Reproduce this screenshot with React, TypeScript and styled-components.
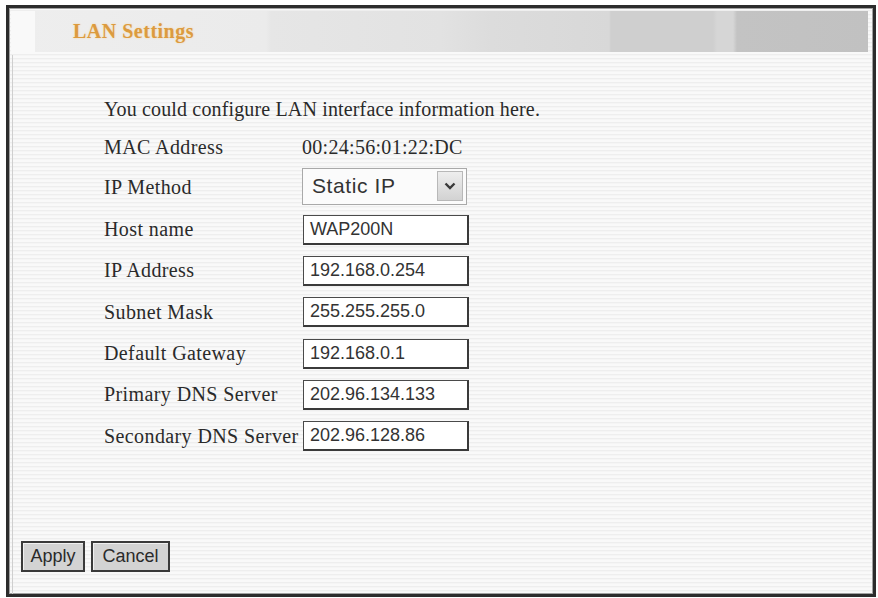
import React from "react";
import styled, { createGlobalStyle } from "styled-components";

const Global = createGlobalStyle`
  html, body { margin: 0; padding: 0; background: #ffffff; }
  body { width: 878px; height: 598px; overflow: hidden; }
`;

const stripes = `repeating-linear-gradient(
  to bottom,
  #f9f9f9 0px,
  #f9f9f9 2px,
  #eeeeee 2px,
  #eeeeee 3px,
  #f5f5f5 3px,
  #f5f5f5 4px
)`;

const Frame = styled.div`
  box-sizing: border-box;
  margin: 5px 0 0 6px;
  width: 870px;
  height: 592px;
  border: 3px solid #2c2c2c;
  box-shadow: inset 0 0 0 1px #a0a0a0;
  background: ${stripes};
  display: flex;
  flex-direction: column;
  padding: 3px 5px 0 2px;
`;

const HeaderBand = styled.div`
  height: 41px;
  display: flex;
  align-items: center;
  flex-shrink: 0;
  background: linear-gradient(
    to right,
    #eeeeee 0px,
    #ebebeb 255px,
    #e6e6e6 260px,
    #e2e2e2 430px,
    #dcdcdc 480px,
    #d8d8d8 598px,
    #cfcfcf 600px,
    #cfcfcf 702px,
    #d6d6d6 706px,
    #d6d6d6 722px,
    #c3c3c3 726px,
    #c1c1c1 100%
  );
`;

const HeaderTab = styled.div`
  width: 24px;
  height: 100%;
  background: #f9f9f9;
`;

const Title = styled.h1`
  margin: 0 0 0 38px;
  font-family: "Liberation Serif", "Times New Roman", serif;
  font-size: 20px;
  font-weight: bold;
  letter-spacing: 0.5px;
  color: #dc9b3f;
  text-shadow: 0 0 2px #f3d29c;
`;

const Content = styled.div`
  flex: 1;
  display: flex;
  flex-direction: column;
  margin: 3px 0 0 1px;
  border-left: 1px solid #cfcfcf;
`;

const Form = styled.div`
  display: grid;
  grid-template-columns: 198px 170px;
  grid-template-rows: 38px 38px 43px repeat(6, 41.3px);
  align-items: center;
  padding: 35px 0 0 91px;
  font-family: "Liberation Serif", "Times New Roman", serif;
  font-size: 20px;
  color: #2a2a2a;
`;

const Intro = styled.div`
  grid-column: 1 / span 2;
  white-space: nowrap;
  letter-spacing: 0.15px;
`;

const Label = styled.div`
  white-space: nowrap;
  letter-spacing: 0.4px;
`;

const Value = styled.div`
  display: flex;
  align-items: center;
  white-space: nowrap;
  letter-spacing: 0.3px;
`;

const TextBox = styled.div`
  box-sizing: border-box;
  width: 166px;
  height: 30px;
  margin-left: 1px;
  background: #ffffff;
  border: 1px solid #4a4a4a;
  border-bottom-width: 2px;
  border-right-width: 2px;
  border-right-color: #3a3a3a;
  border-bottom-color: #3a3a3a;
  display: flex;
  align-items: center;
  padding-left: 6px;
  font-family: "Liberation Sans", Arial, sans-serif;
  font-size: 18px;
  letter-spacing: 0;
  color: #333333;
`;

const Select = styled.div`
  box-sizing: border-box;
  width: 165px;
  height: 37px;
  margin-top: -3px;
  background: #fbfbfb;
  border: 1px solid #a9a9a9;
  display: flex;
  align-items: center;
  justify-content: space-between;
  padding: 0 3px 0 9px;
  font-family: "Liberation Sans", Arial, sans-serif;
  font-size: 21px;
  letter-spacing: 0.6px;
  color: #333333;
`;

const DropButton = styled.div`
  box-sizing: border-box;
  width: 26px;
  height: 30px;
  border: 1px solid #b8b8b8;
  background: linear-gradient(to bottom, #eeeeee, #d2d2d2);
  display: flex;
  align-items: center;
  justify-content: center;
`;

const ButtonBar = styled.div`
  margin-top: auto;
  display: flex;
  gap: 6px;
  padding: 0 0 22px 8px;
`;

const Button = styled.button<{ $w: number }>`
  box-sizing: border-box;
  width: ${(p) => p.$w}px;
  height: 31px;
  padding: 0;
  background: #d3d3d3;
  border: 2px solid #3a3a3a;
  box-shadow: inset 1px 1px 0 #f0f0f0;
  font-family: "Liberation Sans", Arial, sans-serif;
  font-size: 18px;
  color: #2a2a2a;
`;

type Field = { label: string; value: string };

const fields: Field[] = [
  { label: "Host name", value: "WAP200N" },
  { label: "IP Address", value: "192.168.0.254" },
  { label: "Subnet Mask", value: "255.255.255.0" },
  { label: "Default Gateway", value: "192.168.0.1" },
  { label: "Primary DNS Server", value: "202.96.134.133" },
  { label: "Secondary DNS Server", value: "202.96.128.86" },
];

export default function App() {
  return (
    <>
      <Global />
      <Frame>
        <HeaderBand>
          <HeaderTab />
          <Title>LAN Settings</Title>
        </HeaderBand>
        <Content>
          <Form>
            <Intro>You could configure LAN interface information here.</Intro>
            <Label>MAC Address</Label>
            <Value>00:24:56:01:22:DC</Value>
            <Label>IP Method</Label>
            <Value>
              <Select>
                <span>Static IP</span>
                <DropButton>
                  <svg width="12" height="8" viewBox="0 0 12 8">
                    <path d="M1.5 1.5 L6 6 L10.5 1.5" fill="none" stroke="#3a3a3a" strokeWidth="2.4" />
                  </svg>
                </DropButton>
              </Select>
            </Value>
            {fields.map((f) => (
              <React.Fragment key={f.label}>
                <Label>{f.label}</Label>
                <Value>
                  <TextBox>{f.value}</TextBox>
                </Value>
              </React.Fragment>
            ))}
          </Form>
          <ButtonBar>
            <Button $w={64}>Apply</Button>
            <Button $w={79}>Cancel</Button>
          </ButtonBar>
        </Content>
      </Frame>
    </>
  );
}
